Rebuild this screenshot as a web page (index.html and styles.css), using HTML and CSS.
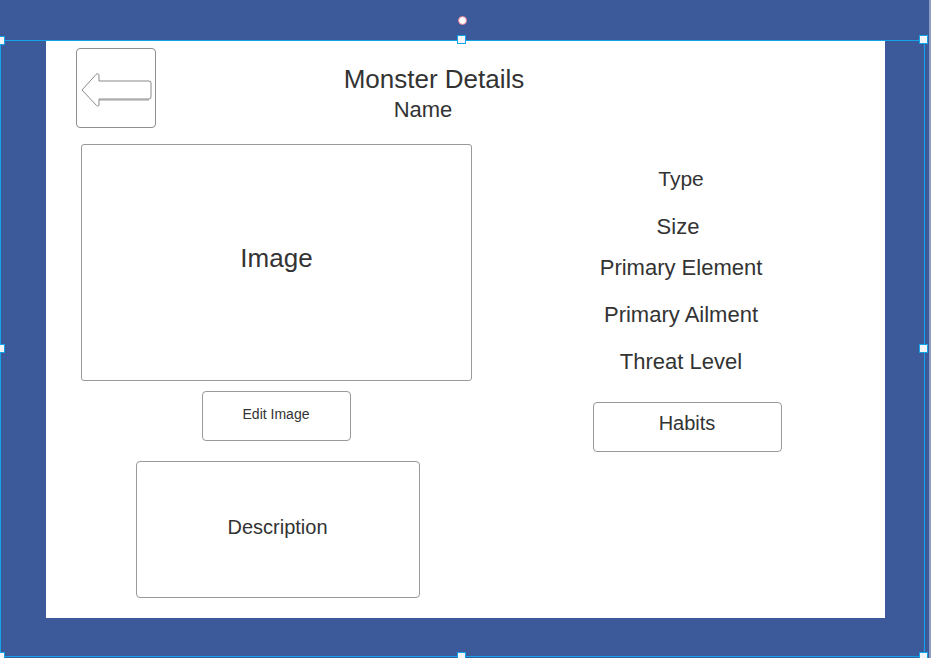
FILE: index.html
```html
<!DOCTYPE html>
<html>
<head>
<meta charset="utf-8">
<link rel="stylesheet" href="styles.css">
</head>
<body>
<div class="stage">
  <div class="panel">
    <div class="header">
      <div class="back-btn">
        <svg width="80" height="80" viewBox="0 0 80 80">
          <path d="M23,52 L73,52" stroke="#cfcfcf" stroke-width="2" fill="none"/>
          <path d="M6,42 L20,26.5 Q23,24.5 23,28 L23,33 L73,33 Q75,33 75,35 L75,49 Q75,51 73,51 L23,51 L23,56 Q23,59.5 20.5,57.5 Z" stroke="#8a8a8a" stroke-width="1" fill="#fff" stroke-linejoin="round"/>
        </svg>
      </div>
      <div class="titles">
        <div class="title">Monster Details</div>
        <div class="name">Name</div>
      </div>
    </div>
    <div class="body">
      <div class="left-col">
        <div class="image-box">Image</div>
        <div class="edit-btn">Edit Image</div>
        <div class="desc-box">Description</div>
      </div>
      <div class="right-col">
        <div class="label type">Type</div>
        <div class="label size">Size</div>
        <div class="label elem">Primary Element</div>
        <div class="label ail">Primary Ailment</div>
        <div class="label threat">Threat Level</div>
        <div class="habits-btn">Habits</div>
      </div>
    </div>
  </div>
  <div class="selection"></div>
  <div class="handle h-tl"></div>
  <div class="handle h-tm"></div>
  <div class="handle h-tr"></div>
  <div class="handle h-ml"></div>
  <div class="handle h-mr"></div>
  <div class="handle h-bl"></div>
  <div class="handle h-bm"></div>
  <div class="handle h-br"></div>
  <div class="rotate"></div>
  <div class="edge-strip"></div>
</div>
</body>
</html>
```
FILE: styles.css
```css
html, body {
  margin: 0;
  padding: 0;
}
body {
  background: #3c5a9a;
  font-family: "Liberation Sans", Arial, sans-serif;
  color: #333;
  width: 931px;
  height: 658px;
  overflow: hidden;
}
.stage {
  position: relative;
  width: 931px;
  height: 658px;
  padding: 41px 0 0 46px;
  box-sizing: border-box;
}
.panel {
  width: 839px;
  height: 577px;
  background: #fff;
  display: flex;
  flex-direction: column;
}
.header {
  display: flex;
  height: 87px;
}
.back-btn {
  margin: 7px 0 0 30px;
  width: 80px;
  height: 80px;
  border: 1px solid #8f8f8f;
  border-radius: 4px;
  box-sizing: border-box;
  display: flex;
}
.back-btn svg {
  margin: -1px;
}
.titles {
  margin-left: 128px;
  width: 300px;
  padding-top: 23px;
  display: flex;
  flex-direction: column;
  align-items: center;
}
.title {
  font-size: 26px;
  line-height: 30px;
}
.name {
  font-size: 22px;
  line-height: 30px;
  margin: 1px 22px 0 0;
}
.body {
  display: flex;
  margin-top: 16px;
}
.left-col {
  margin-left: 35px;
  width: 390px;
  display: flex;
  flex-direction: column;
  align-items: center;
}
.image-box {
  width: 391px;
  height: 237px;
  box-sizing: border-box;
  border: 1px solid #999;
  border-radius: 3px;
  display: flex;
  align-items: center;
  justify-content: center;
  font-size: 26px;
  padding: 0 0 8px 1px;
}
.edit-btn {
  margin-top: 10px;
  width: 149px;
  height: 50px;
  box-sizing: border-box;
  border: 1px solid #999;
  border-radius: 4px;
  display: flex;
  align-items: center;
  justify-content: center;
  font-size: 14px;
  padding-bottom: 5px;
}
.desc-box {
  margin: 20px 0 0 3px;
  width: 284px;
  height: 137px;
  box-sizing: border-box;
  border: 1px solid #999;
  border-radius: 4px;
  display: flex;
  align-items: center;
  justify-content: center;
  font-size: 20px;
  padding-bottom: 5px;
}
.right-col {
  margin-left: 60px;
  width: 300px;
  display: flex;
  flex-direction: column;
  align-items: center;
  padding-top: 22px;
}
.label {
  font-size: 22px;
  line-height: 26px;
}
.type { font-size: 21px; }
.size { margin-top: 22px; margin-right: 6px; }
.elem { margin-top: 15px; }
.ail { margin-top: 21px; }
.threat { margin-top: 21px; }
.habits-btn {
  margin: 27px 0 0 12px;
  width: 189px;
  height: 50px;
  box-sizing: border-box;
  border: 1px solid #999;
  border-radius: 4px;
  display: flex;
  align-items: center;
  justify-content: center;
  font-size: 20px;
  padding-bottom: 7px;
}
.selection {
  position: absolute;
  left: 0;
  top: 40px;
  width: 925px;
  height: 617px;
  border: 1px solid #12a2e8;
  box-sizing: border-box;
  pointer-events: none;
}
.handle {
  position: absolute;
  width: 9px;
  height: 9px;
  box-sizing: border-box;
  background: #f2f6fb;
  border: 1px solid #12a2e8;
}
.h-tl { left: -4px; top: 36px; }
.h-tm { left: 457px; top: 35px; }
.h-tr { left: 919px; top: 35px; }
.h-ml { left: -4px; top: 344px; }
.h-mr { left: 919px; top: 344px; }
.h-bl { left: -4px; top: 652px; }
.h-bm { left: 457px; top: 652px; }
.h-br { left: 919px; top: 652px; }
.rotate {
  position: absolute;
  left: 458px;
  top: 16px;
  width: 9px;
  height: 9px;
  box-sizing: border-box;
  border-radius: 50%;
  background: #fff;
  border: 1.5px solid #e07a8a;
}
.edge-strip {
  position: absolute;
  right: 0;
  top: 0;
  width: 2px;
  height: 658px;
  background: #8e9cc2;
}
```
